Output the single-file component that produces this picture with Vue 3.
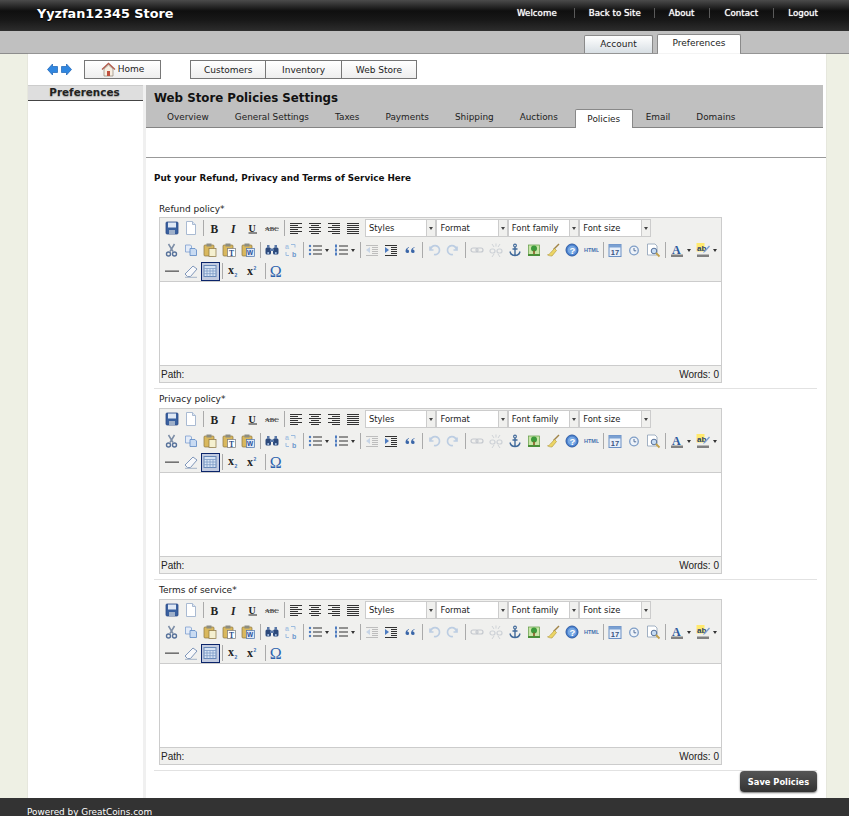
<script setup>
const navLinks = ['Welcome', 'Back to Site', 'About', 'Contact', 'Logout']
const subTabs = ['Overview', 'General Settings', 'Taxes', 'Payments', 'Shipping', 'Auctions', 'Policies', 'Email', 'Domains']
const editors = ['Refund policy*', 'Privacy policy*', 'Terms of service*']
const selects = ['Styles', 'Format', 'Font family', 'Font size']

const lines = (rows, c = '#333') => rows.map(([x, y, w]) => `<rect x="${x}" y="${y}" width="${w}" height="1" fill="${c}"/>`).join('')
const label = (t, x, y, size, fill, extra = '') => `<text x="${x}" y="${y}" font-size="${size}" fill="${fill}" ${extra}>${t}</text>`
const clip = (inner) => `<rect x="2" y="3" width="10" height="11" rx="1" fill="#d9b85e" stroke="#8a7440" stroke-width=".7"/><rect x="4.5" y="1.5" width="5" height="3" fill="#8d8d80"/>${inner}`

const icons = {
  save: `<rect x="2" y="2" width="12" height="12" rx="1" fill="#39609f" stroke="#2b4a86" stroke-width=".8"/><rect x="4" y="2.5" width="8" height="5" fill="#dfe8f5"/><rect x="5" y="10" width="6" height="4" fill="#9fb0c9"/>`,
  new: `<path d="M3.5 1.5h6l3 3v10h-9z" fill="#fff" stroke="#a9bad2"/><path d="M9.5 1.5v3h3" fill="#dde6f2" stroke="#a9bad2"/>`,
  bold: label('B', 3.5, 12.5, 11.5, '#222', 'font-family="Liberation Serif" font-weight="700"'),
  italic: label('I', 5, 12.5, 11.5, '#222', 'font-family="Liberation Serif" font-weight="700" font-style="italic"'),
  underline: label('U', 3.5, 11.5, 10, '#222', 'font-family="Liberation Serif" font-weight="700"') + '<rect x="3.5" y="12.5" width="8.5" height="1" fill="#222"/>',
  strike: label('ABC', 1, 11, 6.5, '#444', 'font-family="Liberation Serif" font-weight="700"') + '<rect x="1" y="8.2" width="14" height=".7" fill="#666"/>',
  left: lines([[2,3,12],[2,5,8],[2,7,12],[2,9,8],[2,11,12],[2,13,8]]),
  center: lines([[2,3,12],[4,5,8],[2,7,12],[4,9,8],[2,11,12],[4,13,8]]),
  right: lines([[2,3,12],[6,5,8],[2,7,12],[6,9,8],[2,11,12],[6,13,8]]),
  full: lines([[2,3,12],[2,5,12],[2,7,12],[2,9,12],[2,11,12],[2,13,12]]),
  cut: `<path d="M4.5 2l4.5 7.5M10.5 2L6 9.5" stroke="#7c8da6" stroke-width="1.5" fill="none"/><circle cx="4.5" cy="12" r="2" fill="none" stroke="#56719a" stroke-width="1.4"/><circle cx="10.5" cy="12" r="2" fill="none" stroke="#56719a" stroke-width="1.4"/>`,
  copy: `<path d="M2.5 3h5l1 1v6h-6z" fill="#e4ecf8" stroke="#7ea0cf" stroke-width=".8"/><path d="M7 6.5h5l1.5 1.5v5.5H7z" fill="#c9dbf2" stroke="#5c88c4" stroke-width=".8"/>`,
  paste: clip(`<rect x="7" y="6.5" width="7" height="8" fill="#f5f0d0" stroke="#8a7440" stroke-width=".7"/>`),
  pastetext: clip(`<rect x="6.5" y="6.5" width="8" height="8" fill="#fff" stroke="#777" stroke-width=".7"/>` + label('T', 8, 13.5, 7.5, '#234a86', 'font-family="Liberation Serif" font-weight="700"')),
  pasteword: clip(`<rect x="6.5" y="6.5" width="8" height="8" fill="#dfe9f7" stroke="#4a72ab" stroke-width=".7"/>` + label('W', 7, 13.3, 6.5, '#1f4f9d', 'font-family="Liberation Sans" font-weight="700"')),
  find: `<rect x="1.5" y="5.5" width="5.5" height="7" rx="1.5" fill="#2d4a7c"/><rect x="9" y="5.5" width="5.5" height="7" rx="1.5" fill="#2d4a7c"/><rect x="6" y="6.5" width="4" height="2.5" fill="#5b79a8"/><rect x="3" y="3" width="2.5" height="3" fill="#5b79a8"/><rect x="10.5" y="3" width="2.5" height="3" fill="#5b79a8"/><circle cx="4.2" cy="11" r="1" fill="#a9c6ea"/><circle cx="11.8" cy="11" r="1" fill="#a9c6ea"/>`,
  replace: label('a', 2, 7, 7, '#a9c4e2', 'font-family="Liberation Sans" font-weight="700"') + label('b', 9, 14.5, 7, '#6d98cd', 'font-family="Liberation Sans" font-weight="700"') + `<path d="M8 2.5h4v3M3 10v3.5h3" stroke="#9dbcdf" fill="none"/>`,
  bullist: `<circle cx="3" cy="4" r="1.2" fill="#4e7cc0"/><circle cx="3" cy="8" r="1.2" fill="#4e7cc0"/><circle cx="3" cy="12" r="1.2" fill="#4e7cc0"/>` + lines([[6,3.5,9],[6,7.5,9],[6,11.5,9]]),
  numlist: `<rect x="2" y="2.5" width="2" height="3" fill="#4e7cc0"/><rect x="2" y="6.5" width="2" height="3" fill="#4e7cc0"/><rect x="2" y="10.5" width="2" height="3" fill="#4e7cc0"/>` + lines([[6,3.5,9],[6,7.5,9],[6,11.5,9]]),
  outdent: lines([[2,3,12],[8,5,6],[8,7,6],[8,9,6],[8,11,6],[2,13,12]], '#bdbdbd') + `<path d="M6 5v6L2 8z" fill="#c6d4e6"/>`,
  indent: lines([[2,3,12],[8,5,6],[8,7,6],[8,9,6],[8,11,6],[2,13,12]], '#333') + `<path d="M2 5v6l4-3z" fill="#4e7cc0"/>`,
  quote: `<path d="M7 5C5 5.8 3.5 7 3.5 9.3a1.8 1.8 0 1 0 1.6-1.8C5.3 6.7 6 6.2 7 5.8zM12.5 5c-2 .8-3.5 2-3.5 4.3a1.8 1.8 0 1 0 1.6-1.8c.2-.8.9-1.3 1.9-1.7z" fill="#3a66a8"/>`,
  undo: `<path d="M4 4.5v3.5h3.5M4.5 8A4.5 4.5 0 1 1 8 12.5" fill="none" stroke="#bccde2" stroke-width="1.7"/>`,
  redo: `<path d="M12 4.5v3.5H8.5M11.5 8A4.5 4.5 0 1 0 8 12.5" fill="none" stroke="#bccde2" stroke-width="1.7"/>`,
  link: `<rect x="2" y="6" width="7" height="4" rx="2" fill="none" stroke="#c4c8ce" stroke-width="1.2"/><rect x="7" y="6" width="7" height="4" rx="2" fill="none" stroke="#c4c8ce" stroke-width="1.2"/>`,
  unlink: `<rect x="2" y="7" width="5" height="4" rx="2" fill="none" stroke="#cdd1d6" stroke-width="1.2"/><rect x="9" y="7" width="5" height="4" rx="2" fill="none" stroke="#cdd1d6" stroke-width="1.2"/><path d="M4 2l2 3M12 2l-2 3M8 1.5v3M4 15l2-3M12 15l-2-3" stroke="#cfd3d7"/>`,
  anchor: `<circle cx="8" cy="3.5" r="1.4" fill="none" stroke="#40699a" stroke-width="1.1"/><path d="M8 5v8.5M5.5 7h5M3 9.5c.5 2.5 2.8 4 5 4s4.500-1.500 5-4" fill="none" stroke="#40699a" stroke-width="1.4"/>`,
  image: `<rect x="2.5" y="3" width="11" height="10" fill="#c9e6a8" stroke="#5f9a42" stroke-width=".7"/><circle cx="8" cy="6.5" r="3" fill="#3c9a3c"/><rect x="7.2" y="8.5" width="1.6" height="3.5" fill="#8a5a25"/><rect x="2" y="12" width="12" height="2" fill="#4a8f38"/>`,
  cleanup: `<path d="M14 2L8.5 7.5" stroke="#a08448" stroke-width="1.5"/><path d="M9.5 6.5l2 2L7 14C5 14 3.5 13.5 2.5 12.8c2 0 3.5-2.8 7-6.3z" fill="#ecd565" stroke="#ad9336" stroke-width=".6"/>`,
  help: `<circle cx="8" cy="8" r="6" fill="#4a82cf" stroke="#2e5ca5"/><circle cx="8" cy="8" r="4.3" fill="#7aa9e3"/>` + label('?', 5.5, 11.5, 9.5, '#fff', 'font-family="Liberation Sans" font-weight="700"'),
  html: label('HTML', 1, 10, 5.5, '#4570ae', 'font-family="Liberation Sans" font-weight="700"'),
  date: `<rect x="2" y="2.5" width="12" height="12" fill="#e8f0fa" stroke="#6a8fc4"/><rect x="2" y="2.5" width="12" height="3" fill="#7aa0d2"/>` + label('17', 3.8, 13, 7.5, '#3a5480', 'font-family="Liberation Sans" font-weight="700"'),
  time: `<circle cx="8" cy="8.5" r="4.3" fill="#eef3f9" stroke="#7e9dc6" stroke-width="1.3"/><path d="M8 6v2.8h2.2" stroke="#56719a" fill="none"/>`,
  preview: `<path d="M2.5 2h7.5l2 2v9H2.5z" fill="#fff" stroke="#8c9eb5" stroke-width=".8"/><circle cx="9" cy="9" r="2.8" fill="#c6dcf3" stroke="#56719a"/><path d="M11 11l3.5 3.5" stroke="#c2a04a" stroke-width="1.8"/>`,
  forecolor: label('A', 3, 11.5, 12, '#2c5a9e', 'font-family="Liberation Serif" font-weight="700"') + '<rect x="2" y="12.5" width="12" height="2.5" fill="#808080"/>',
  backcolor: `<rect x="1.5" y="1" width="8" height="8.5" fill="#ffe96e"/>` + label('ab', 2, 8.5, 8, '#1f3f6e', 'font-family="Liberation Sans" font-weight="700"') + `<path d="M14 3.5l-5 5.5-1 2 2-1 5-5.5z" fill="#7ea2d0"/><rect x="2" y="12.5" width="12" height="2.5" fill="#808080"/>`,
  hr: '<rect x="1" y="7.5" width="14" height="1.3" fill="#555"/>',
  eraser: `<path d="M10 3l4 3-6.5 7.5h-3L2 11z" fill="#f7f8fa" stroke="#8097ba"/><path d="M2 14.3h12" stroke="#a5b4c8"/>`,
  visual: `<rect x="2" y="2.5" width="12" height="11" fill="#d6e3f4" stroke="#6688b8"/><path d="M2 5.5h12M2 8h12M2 10.7h12M5 5.5v8M8 5.5v8M11 5.5v8" stroke="#7f9dc7" stroke-width=".8"/>`,
  sub: label('x', 2, 11, 12, '#222', 'font-family="Liberation Serif" font-weight="700"') + label('2', 8.5, 13.5, 5, '#3d70b5', 'font-family="Liberation Sans" font-weight="700"'),
  sup: label('x', 2, 12, 12, '#222', 'font-family="Liberation Serif" font-weight="700"') + label('2', 8.5, 7, 5, '#3d70b5', 'font-family="Liberation Sans" font-weight="700"'),
  omega: label('Ω', 0.8, 13.5, 16, '#2d62ad', 'font-family="Liberation Serif" font-weight="400"')
}

const row2 = ['cut','copy','paste','pastetext','pasteword','|','find','replace','|','bullist>','numlist>','|','outdent','indent','quote','|','undo','redo','|','link','unlink','anchor','image','cleanup','help','html','|','date','time','preview','|','forecolor>','backcolor>']
const row1 = ['save','new','|','bold','italic','underline','strike','|','left','center','right','full']
const row3 = ['hr','eraser','visual','|','sub','sup','|','omega']
const parse = (r) => r.map((s) => ({ sep: s === '|', split: s.endsWith('>'), name: s.replace('>', '') }))
const rows = { one: parse(row1), two: parse(row2), three: parse(row3) }
</script>

<template>
  <div class="page">
    <header class="topbar">
      <div class="brand">Yyzfan12345 Store</div>
      <nav class="toplinks">
        <a v-for="l in navLinks" :key="l" class="toplink">{{ l }}</a>
      </nav>
    </header>

    <div class="tabstrip">
      <span class="ttab">Account</span>
      <span class="ttab on">Preferences</span>
    </div>

    <div class="shell">
      <div class="navrow">
        <div class="arrows">
          <svg width="11" height="13" viewBox="0 0 11 13"><path d="M0.5 6.5L5.5 1V3.5H10.5V9.5H5.5V12Z" fill="#2f86e0" stroke="#1a62b5" stroke-width=".7"/></svg>
          <svg width="11" height="13" viewBox="0 0 11 13"><path d="M10.5 6.5L5.5 1V3.5H0.5V9.5H5.5V12Z" fill="#2f86e0" stroke="#1a62b5" stroke-width=".7"/></svg>
        </div>
        <button class="navbtn home">
          <svg width="15" height="15" viewBox="0 0 15 15"><path d="M1 7.5L7.5 1.5L14 7.5" fill="none" stroke="#b25a4a" stroke-width="1.3"/><path d="M3 7v7h9V7L7.5 3z" fill="#f7efe2" stroke="#8f8577" stroke-width=".7"/><rect x="6" y="9" width="3" height="5" fill="#c0503f"/></svg>
          <span class="hometext">Home</span>
        </button>
        <div class="navgroup">
          <button class="navbtn">Customers</button>
          <button class="navbtn">Inventory</button>
          <button class="navbtn">Web Store</button>
        </div>
      </div>

      <div class="columns">
        <aside class="side">
          <div class="sidehead">Preferences</div>
        </aside>
        <main class="main">
          <div class="band">
            <h1 class="title">Web Store Policies Settings</h1>
            <div class="subtabs">
              <span v-for="t in subTabs" :key="t" class="stab" :class="{ on: t === 'Policies' }">{{ t }}</span>
            </div>
          </div>
          <div class="gapline"></div>
          <h2 class="lead">Put your Refund, Privacy and Terms of Service Here</h2>

          <section v-for="e in editors" :key="e" class="field">
            <label class="flabel">{{ e }}</label>
            <div class="editor">
              <div class="tools">
                <div class="trow">
                  <template v-for="(b, j) in rows.one" :key="j">
                    <i v-if="b.sep" class="sep"></i>
                    <span v-else class="btn"><svg width="16" height="16" viewBox="0 0 16 16" v-html="icons[b.name]"></svg></span>
                  </template>
                  <span class="sels">
                    <span v-for="s in selects" :key="s" class="sel"><span class="seltext">{{ s }}</span><span class="selarrow"></span></span>
                  </span>
                </div>
                <div class="trow">
                  <template v-for="(b, j) in rows.two" :key="j">
                    <i v-if="b.sep" class="sep"></i>
                    <span v-else class="btn" :class="{ split: b.split }"><svg width="16" height="16" viewBox="0 0 16 16" v-html="icons[b.name]"></svg><span v-if="b.split" class="caret"></span></span>
                  </template>
                </div>
                <div class="trow">
                  <template v-for="(b, j) in rows.three" :key="j">
                    <i v-if="b.sep" class="sep"></i>
                    <span v-else class="btn" :class="{ active: b.name === 'visual' }"><svg width="16" height="16" viewBox="0 0 16 16" v-html="icons[b.name]"></svg></span>
                  </template>
                </div>
              </div>
              <div class="area"></div>
              <div class="status"><span>Path:</span><span>Words: 0</span></div>
            </div>
          </section>

          <div class="actions"><button class="save">Save Policies</button></div>
        </main>
      </div>
    </div>

    <footer class="foot">Powered by GreatCoins.com</footer>
  </div>
</template>

<style>
html, body { margin: 0; background: #eef0e4; }
</style>

<style scoped>
.page { height: 816px; overflow: hidden; display: flex; flex-direction: column; font-family: "DejaVu Sans", Verdana, sans-serif; font-size: 9px; color: #222; background: #eef0e4; }
.topbar { height: 31px; flex: none; display: flex; align-items: center; justify-content: space-between; padding-left: 37px; padding-bottom: 5px; box-sizing: border-box; background: linear-gradient(#4b4b4b 0, #0f0f0f 11px, #181818 20px, #2b2b2b 30px, #333 31px); color: #fff; }
.brand { font-size: 12.8px; font-weight: 700; text-shadow: 0 1px 1px #000; }
.toplinks { display: flex; padding-right: 16px; }
.toplink { padding: 0 15px 0 14px; line-height: 10px; border-left: 1px solid #5a5a5a; color: #fff; font-size: 8.7px; font-weight: 500; text-shadow: 0 0 1px #fff; }
.toplink:first-child { border-left: none; padding-right: 17px; }
.toplink:nth-child(2) { padding-right: 13px; }
.tabstrip { height: 23px; flex: none; box-sizing: border-box; background: #c0c0c0; border-bottom: 1px solid #8d8d8d; display: flex; align-items: flex-end; gap: 4px; padding-left: 584px; }
.ttab { width: 69px; height: 18px; box-sizing: border-box; border: 1px solid #8a8a8a; border-bottom: none; border-radius: 2px 2px 0 0; background: linear-gradient(#fff, #d8dfe4); text-align: center; line-height: 17px; }
.ttab.on { width: 84px; background: #fff; margin-bottom: -1px; height: 20px; }
.shell { flex: 1; min-height: 0; margin: 0 23px 0 28px; background: #fff; display: flex; flex-direction: column; box-shadow: 0 0 1px #bbb; }
.navrow { height: 31px; flex: none; box-sizing: border-box; display: flex; align-items: center; padding-left: 19px; }
.arrows { display: flex; gap: 3px; width: 37px; }
.navbtn { font: inherit; color: #222; height: 19px; padding: 0; border: 1px solid #777; background: linear-gradient(#fff, #eee); display: flex; align-items: center; justify-content: center; }
.home { width: 77px; gap: 2px; margin-right: 29px; }
.hometext { margin-top: -2px; }
.navgroup { display: flex; }
.navgroup .navbtn { width: 76.4px; }
.navgroup .navbtn + .navbtn { margin-left: -1px; }
.columns { flex: 1; min-height: 0; display: flex; }
.side { width: 115px; flex: none; border-right: 3px solid #f0f0f0; }
.sidehead { height: 16px; box-sizing: border-box; background: #dedede; border-top: 1px solid #ccc; border-bottom: 1px solid #444; text-align: center; font-size: 10.4px; font-weight: 700; line-height: 13px; padding-right: 2px; text-shadow: 0 1px 1px #aaa; }
.main { flex: 1; min-width: 0; }
.band { margin-right: 3px; height: 43px; box-sizing: border-box; background: #c0c0c0; border-bottom: 1px solid #848484; display: flex; flex-direction: column; justify-content: space-between; padding-left: 8px; }
.title { margin: 6px 0 0; font-size: 11.8px; line-height: 15px; font-weight: 700; color: #111; }
.subtabs { display: flex; height: 18px; font-size: 8.9px; }
.stab { padding: 0 13px; line-height: 17px; white-space: nowrap; }
.stab.on { height: 19px; box-sizing: border-box; margin-left: 4px; background: #fff; border: 1px solid #888; border-bottom: none; border-radius: 2px 2px 0 0; padding: 0 11.5px; line-height: 18px; }
.gapline { height: 29px; border-bottom: 1px solid #999; }
.lead { margin: 14px 0 0 8px; font-size: 8.8px; line-height: 12px; font-weight: 700; color: #111; }
.field { margin: 0 9px 0 8px; padding: 3px 5px 0; border-bottom: 1px solid #e2e2e2; height: 191px; box-sizing: border-box; }
.lead + .field { height: 205px; padding-top: 18px; }
.flabel { display: block; height: 16px; line-height: 14px; }
.lead + .field .flabel { height: 15px; }
.editor { width: 563px; height: 166px; box-sizing: border-box; border: 1px solid #ccc; display: flex; flex-direction: column; font-family: "Liberation Sans", Arial, sans-serif; }
.tools { height: 64px; flex: none; box-sizing: border-box; background: #f0f0ee; border-bottom: 1px solid #ccc; padding-left: 2.5px; }
.trow { height: 20px; display: flex; align-items: center; }
.trow:nth-child(2) { margin-top: 2px; }
.trow:nth-child(3) { margin-top: 1px; }
.btn { width: 19px; height: 19px; flex: none; display: flex; align-items: center; justify-content: center; box-sizing: border-box; }
.btn.split { width: 26px; justify-content: flex-start; padding-left: 1.5px; }
.btn.active { background: #c2cbe0; border: 1px solid #0a246a; }
.caret { width: 0; height: 0; margin-left: 2px; border: 2px solid transparent; border-top: 3px solid #333; border-bottom: none; }
.sep { width: 1px; height: 16px; flex: none; background: #aaa; margin: 0 2px; }
.sels { display: flex; margin-left: 2.5px; }
.sel { width: 71.4px; height: 18px; flex: none; box-sizing: border-box; display: flex; }
.seltext { flex: 1; background: #fff; border: 1px solid #ccc; padding-left: 3px; font-family: "DejaVu Sans", sans-serif; font-size: 8.4px; line-height: 16px; color: #222; box-sizing: border-box; }
.selarrow { width: 9px; background: #f0f0ee; border: 1px solid #ccc; border-left: none; box-sizing: border-box; display: flex; align-items: center; justify-content: center; }
.selarrow::after { content: ""; border: 2px solid transparent; border-top: 3px solid #444; border-bottom: none; }
.area { flex: 1; background: #fff; }
.status { height: 17px; flex: none; box-sizing: border-box; background: #f0f0ee; border-top: 1px solid #ccc; display: flex; justify-content: space-between; align-items: center; padding: 0 2px 0 1px; font-size: 10px; color: #222; }
.actions { display: flex; justify-content: flex-end; margin-right: 9px; }
.save { width: 77px; height: 21px; padding: 0; border: none; border-radius: 4px; background: linear-gradient(#555, #333); box-shadow: 0 1px 2px #777; color: #fff; font: 700 8.3px "DejaVu Sans", sans-serif; white-space: nowrap; }
.foot { height: 18px; flex: none; box-sizing: border-box; background: #333; color: #fff; padding: 8px 0 0 27px; line-height: 12px; font-size: 8.9px; }
</style>
